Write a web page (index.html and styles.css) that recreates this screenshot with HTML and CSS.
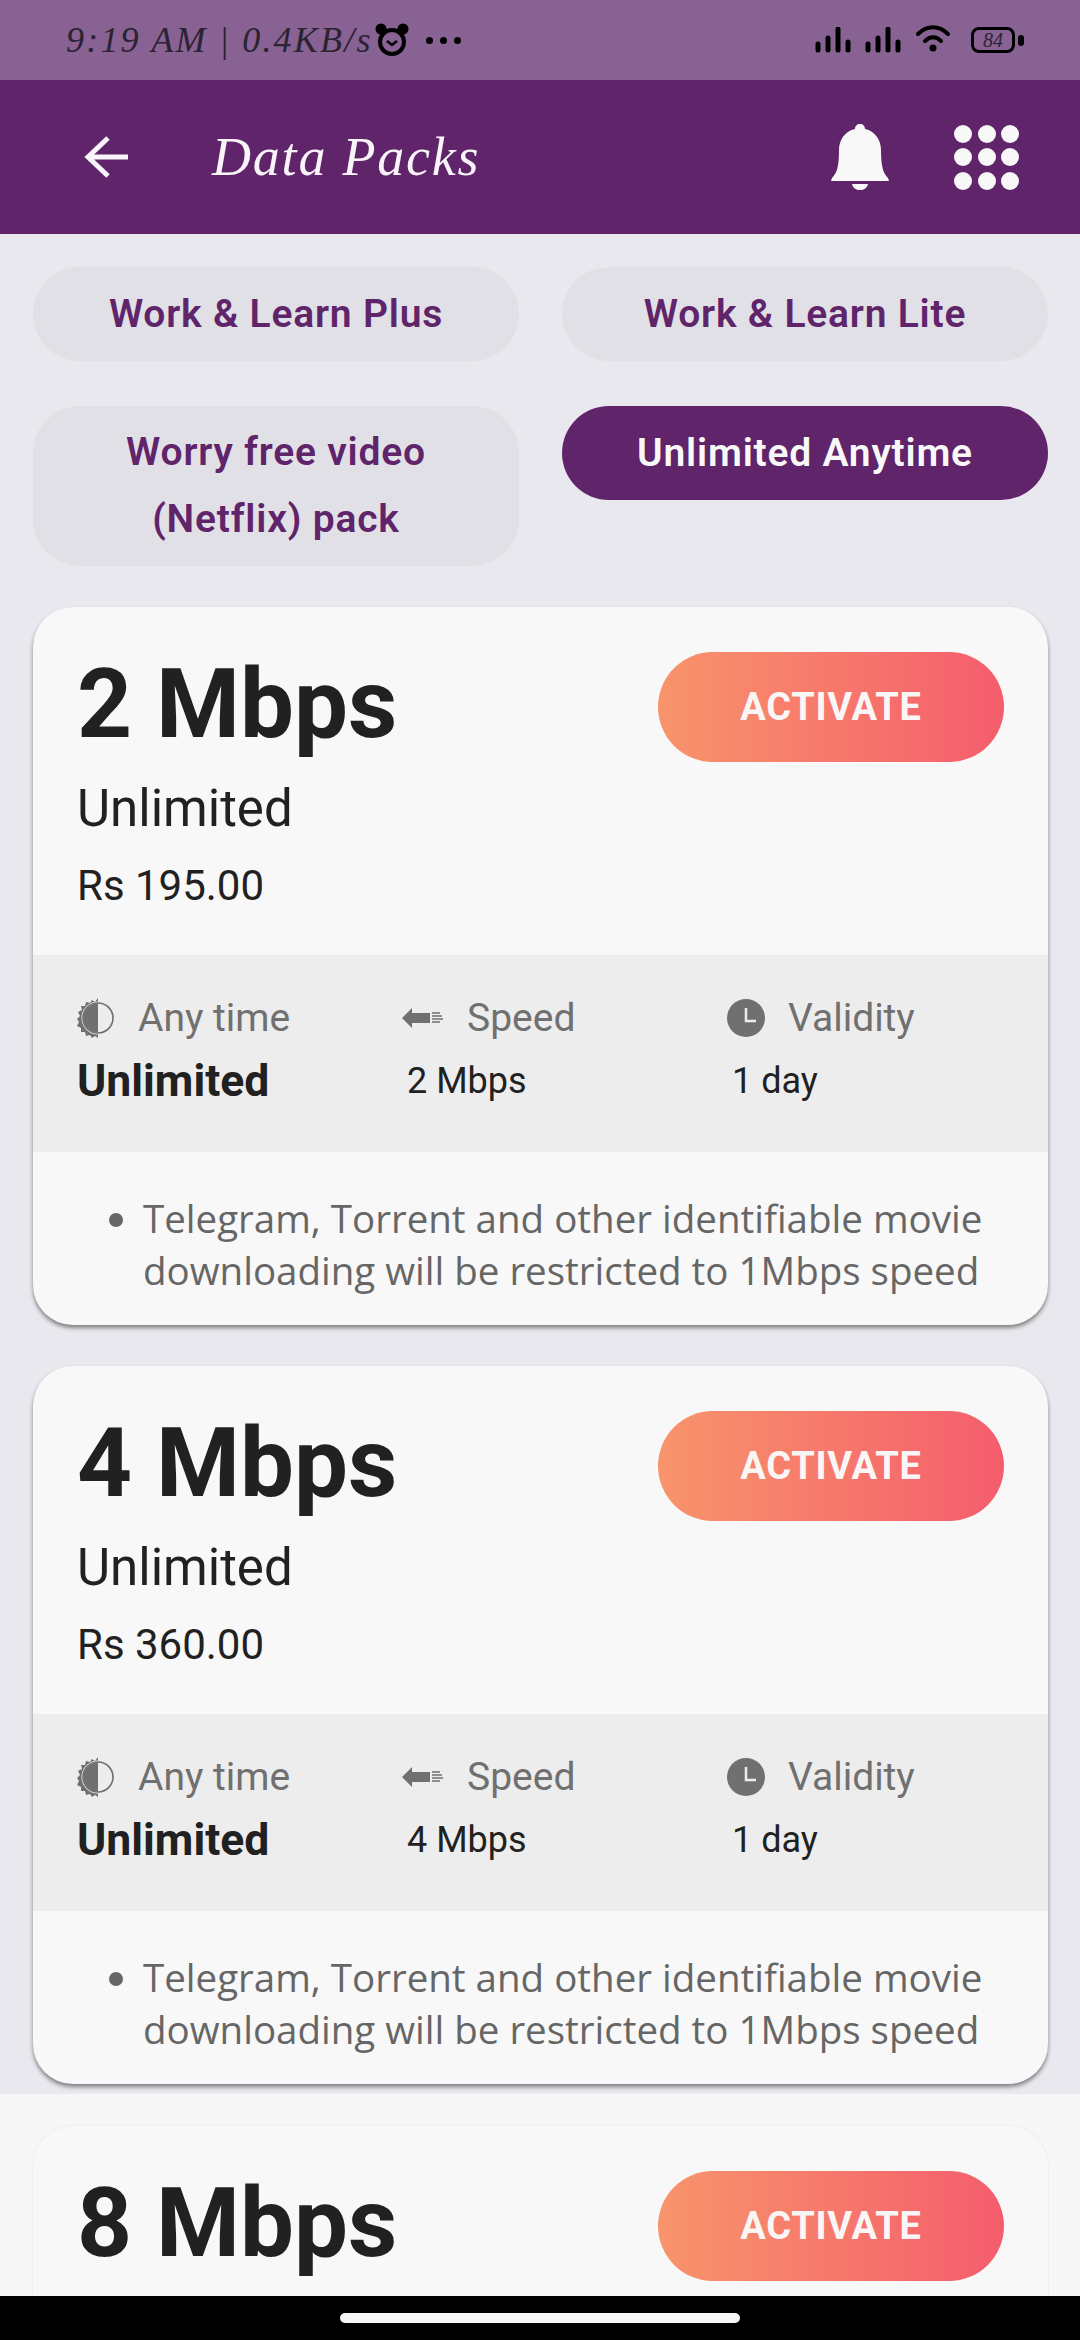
FILE: index.html
```html
<!DOCTYPE html>
<html lang="en">
<head>
<meta charset="utf-8">
<title>Data Packs</title>
<link rel="stylesheet" href="styles.css">
</head>
<body>
<svg class="defs" width="0" height="0" aria-hidden="true">
  <defs>
    <symbol id="i-sun" viewBox="0 0 38 42">
      <path d="M21 1v40l-3-2-3 2-2-3-4 1-1-4-4 0 0-4-4-2 2-4-2-3 3-3-2-4 4-2-1-4 4 0 1-4 4 1 2-3 3 2z" fill="#707070"/>
      <circle cx="21" cy="21" r="15.5" fill="#707070" stroke="#ededed" stroke-width="2"/>
      <path d="M21 6.5a14.500 14.500 0 0 1 0 29z" fill="#ededed"/>
      <circle cx="21" cy="21" r="15" fill="none" stroke="#707070" stroke-width="1.600"/>
    </symbol>
    <symbol id="i-speed" viewBox="0 0 42 22">
      <path d="M0 11 10 1v5h18v10H10v5z" fill="#707070"/>
      <path d="M30 6h8M30 9h10M30 12h11M30 15h8" stroke="#707070" stroke-width="1.500"/>
    </symbol>
    <symbol id="i-clock" viewBox="0 0 38 38">
      <circle cx="19" cy="19" r="19" fill="#707070"/>
      <path d="M19 9v13h10" fill="none" stroke="#ededed" stroke-width="2.500"/>
    </symbol>
  </defs>
</svg>

<div class="screen">
  <header class="top">
    <div class="status">
      <span class="clock">9:19 AM | 0.4KB/s</span>
      <svg class="alarm" viewBox="0 0 34 34"><circle cx="6" cy="6" r="5.500"/><circle cx="28" cy="6" r="5.500"/><circle cx="17" cy="19" r="12" fill="none" stroke="#000" stroke-width="4"/><path d="M12 18l5 4 5-4" fill="none" stroke="#000" stroke-width="2.500"/></svg>
      <span class="more"><i></i><i></i><i></i></span>
      <span class="status-gap"></span>
      <svg class="signal" viewBox="0 0 37 26"><path d="M3 17v6M13 11v12M23 2v21M33 15v8" stroke="#000" stroke-width="5" stroke-linecap="round" fill="none"/></svg>
      <svg class="signal" viewBox="0 0 37 26"><path d="M3 17v6M13 11v12M23 2v21M33 15v8" stroke="#000" stroke-width="5" stroke-linecap="round" fill="none"/></svg>
      <svg class="wifi" viewBox="0 0 34 28"><path d="M2 10C11 1 23 1 32 10" fill="none" stroke="#000" stroke-width="4" stroke-linecap="round"/><path d="M9 17c5-5 11-5 16 0" fill="none" stroke="#000" stroke-width="4" stroke-linecap="round"/><circle cx="17" cy="24" r="3.500"/></svg>
      <span class="battery"><span class="battery-body">84</span><span class="battery-nub"></span></span>
    </div>
    <div class="appbar">
      <svg class="back" viewBox="0 0 44 44"><path d="M44 22H5M24 3 4 22l20 19" fill="none" stroke="#f8f4f9" stroke-width="5"/></svg>
      <h1 class="page-title">Data Packs</h1>
      <svg class="bell" viewBox="0 0 58 66"><path d="M29 0c3 0 5 2 5 5 10 2 16 11 16 21 0 16 2 23 7 28l1 3H0l1-3c5-5 7-12 7-28C8 16 14 7 24 5c0-3 2-5 5-5zM21 60h16c-1 4-4 6-8 6s-7-2-8-6z" fill="#f8f8f8"/></svg>
      <div class="dots"><i></i><i></i><i></i><i></i><i></i><i></i><i></i><i></i><i></i></div>
    </div>
  </header>

  <main class="content">
    <section class="upper">
      <div class="chips">
        <button class="chip">Work &amp; Learn Plus</button>
        <button class="chip">Work &amp; Learn Lite</button>
        <button class="chip chip-tall">Worry free video<br>(Netflix) pack</button>
        <button class="chip chip-on">Unlimited Anytime</button>
      </div>

      <article class="card">
        <div class="card-head">
          <div class="plan">
            <h2 class="speed">2 Mbps</h2>
            <p class="kind">Unlimited</p>
            <p class="price">Rs 195.00</p>
          </div>
          <button class="activate">ACTIVATE</button>
        </div>
        <div class="facts">
          <div class="fact">
            <div class="fact-label"><svg class="ic-sun"><use href="#i-sun"/></svg>Any time</div>
            <div class="fact-value fact-strong">Unlimited</div>
          </div>
          <div class="fact">
            <div class="fact-label"><svg class="ic-speed"><use href="#i-speed"/></svg>Speed</div>
            <div class="fact-value">2 Mbps</div>
          </div>
          <div class="fact">
            <div class="fact-label"><svg class="ic-clock"><use href="#i-clock"/></svg>Validity</div>
            <div class="fact-value">1 day</div>
          </div>
        </div>
        <ul class="notes"><li>Telegram, Torrent and other identifiable movie downloading will be restricted to 1Mbps speed</li></ul>
      </article>

      <article class="card">
        <div class="card-head">
          <div class="plan">
            <h2 class="speed">4 Mbps</h2>
            <p class="kind">Unlimited</p>
            <p class="price">Rs 360.00</p>
          </div>
          <button class="activate">ACTIVATE</button>
        </div>
        <div class="facts">
          <div class="fact">
            <div class="fact-label"><svg class="ic-sun"><use href="#i-sun"/></svg>Any time</div>
            <div class="fact-value fact-strong">Unlimited</div>
          </div>
          <div class="fact">
            <div class="fact-label"><svg class="ic-speed"><use href="#i-speed"/></svg>Speed</div>
            <div class="fact-value">4 Mbps</div>
          </div>
          <div class="fact">
            <div class="fact-label"><svg class="ic-clock"><use href="#i-clock"/></svg>Validity</div>
            <div class="fact-value">1 day</div>
          </div>
        </div>
        <ul class="notes"><li>Telegram, Torrent and other identifiable movie downloading will be restricted to 1Mbps speed</li></ul>
      </article>
    </section>

    <section class="lower">
      <article class="card card-flat">
        <div class="card-head">
          <div class="plan">
            <h2 class="speed">8 Mbps</h2>
          </div>
          <button class="activate">ACTIVATE</button>
        </div>
      </article>
    </section>
  </main>

  <nav class="navbar"><span class="home-pill"></span></nav>
</div>
</body>
</html>
```

FILE: styles.css
```css
* { box-sizing: border-box; }
html, body { margin: 0; padding: 0; }
body { font-family: Roboto, "Liberation Sans", sans-serif; background: #e9e8ee; }
.defs { position: absolute; }
.screen { width: 1080px; height: 2340px; display: flex; flex-direction: column; overflow: hidden; }

.top { flex: none; }
.status { height: 80px; background: #886292; display: flex; align-items: center; padding: 0 56px 0 66px; }
.clock { font: italic 400 36px/1 "Liberation Serif", serif; color: #2b2233; width: 305px; white-space: nowrap; letter-spacing: 2.200px; }
.alarm { width: 34px; height: 34px; margin-left: 4px; }
.more { display: flex; gap: 7px; margin-left: 17px; }
.more i { width: 7px; height: 7px; border-radius: 50%; background: #000; }
.status-gap { flex: 1; }
.signal { width: 37px; height: 26px; margin-right: 13px; }
.wifi { width: 34px; height: 28px; margin-left: 1px; margin-bottom: 4px; }
.battery { display: flex; align-items: center; gap: 3px; margin-left: 21px; }
.battery-body { width: 44px; height: 26px; border: 3px solid #000; border-radius: 8px; font: italic 400 20px/20px "Liberation Serif", serif; color: #2b2233; text-align: center; }
.battery-nub { width: 6px; height: 11px; background: #000; border-radius: 3px; }

.appbar { height: 154px; background: #5f246a; display: flex; align-items: center; padding: 0 61px 0 84px; }
.back { width: 44px; height: 44px; }
.page-title { margin: 0 0 0 84px; flex: 1; font: italic 400 54px/1 "Liberation Serif", serif; letter-spacing: 1.800px; color: #f8f4f9; }
.bell { width: 58px; height: 66px; margin-right: 65px; }
.dots { display: grid; grid-template-columns: repeat(3, 18px); gap: 5.500px; }
.dots i { width: 18px; height: 18px; border-radius: 50%; background: #f8f8f8; }

.content { flex: 1; min-height: 0; overflow: hidden; }
.upper { padding: 33px 32px 10px 33px; }
.lower { background: #f7f7f7; padding: 32px 32px 0 33px; height: 300px; }

.chips { display: grid; grid-template-columns: 486px 486px; column-gap: 43px; row-gap: 45px; align-items: start; margin-bottom: 41px; }
.chip { border: 0; margin: 0; padding: 0 20px; height: 94px; border-radius: 47px; background: #e1e0e6; color: #5f246a; font: 600 39px/67px Roboto, sans-serif; letter-spacing: 0.800px; text-align: center; }
.chip-tall { height: 160px; }
.chip-on { height: 94px; background: #5f246a; color: #f8f8f8; }

.card { background: #f8f8f8; border-radius: 40px; overflow: hidden; box-shadow: 0 3px 4px rgba(0,0,0,.45); }
.card + .card { margin-top: 41px; }
.card-flat { box-shadow: 0 0 3px rgba(0,0,0,.08); }
.card-head { height: 348px; padding: 45px 44px 0 44px; display: flex; justify-content: space-between; align-items: flex-start; }
.speed { margin: -3px 0 0; font: 700 96px/110px Roboto, sans-serif; color: #212121; }
.kind { margin: 20px 0 0; font: 400 51px/60px Roboto, sans-serif; color: #212121; }
.price { margin: 22px 0 0; font: 400 42px/50px Roboto, sans-serif; color: #212121; }
.activate { border: 0; width: 346px; height: 110px; border-radius: 55px; background: linear-gradient(90deg, #f8946b, #f55d6d); color: #fbf6f6; font: 700 38px/1 Roboto, sans-serif; letter-spacing: 0.700px; }

.facts { height: 197px; background: #ededed; display: grid; grid-template-columns: 325px 325px 1fr; padding: 35px 0 0 44px; }
.fact-label { display: flex; align-items: center; gap: 23px; height: 56px; font: 400 39px/56px Roboto, sans-serif; color: #707070; }
.fact-value { margin-top: 5px; height: 60px; font: 400 36px/60px Roboto, sans-serif; color: #212121; padding-left: 5px; }
.fact-strong { font-weight: 700; font-size: 44.500px; padding-left: 0; }
.ic-sun { width: 38px; height: 42px; }
.ic-speed { width: 42px; height: 22px; }
.ic-clock { width: 38px; height: 38px; }

.notes { margin: 0; padding: 40px 30px 0 110px; height: 173px; font: 400 38.500px/52px "Open Sans", sans-serif; color: #666; }

.navbar { flex: none; height: 44px; background: #000; display: flex; align-items: center; justify-content: center; }
.home-pill { width: 400px; height: 10px; border-radius: 5px; background: #f8f8f8; }
```
